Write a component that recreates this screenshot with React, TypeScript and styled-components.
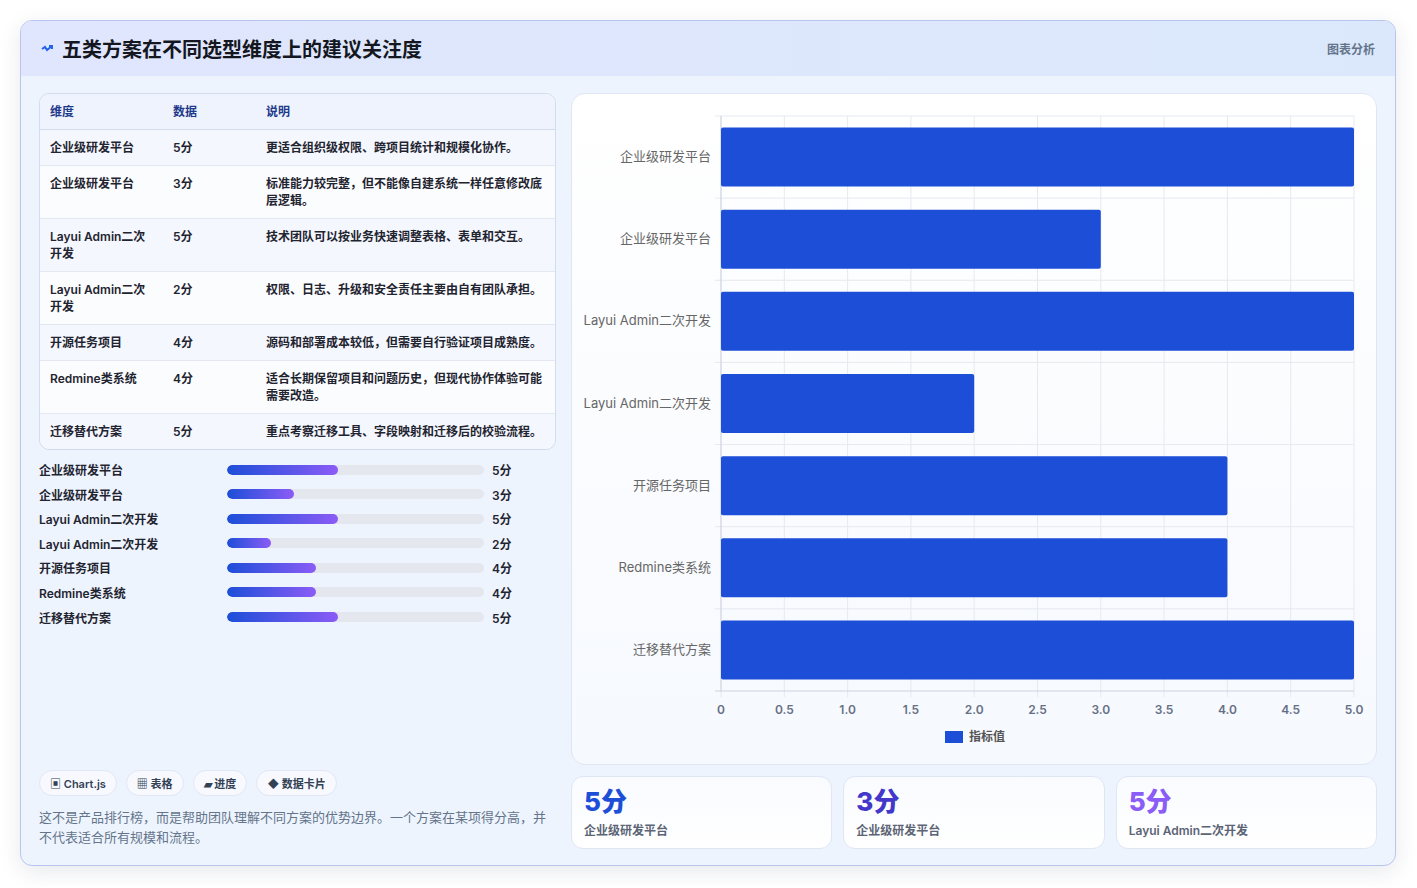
import styled, { createGlobalStyle } from 'styled-components';

/* —— data —— */
interface Row { name: string; score: number; note: string }
const rows: Row[] = [
  { name: '企业级研发平台', score: 5, note: '更适合组织级权限、跨项目统计和规模化协作。' },
  { name: '企业级研发平台', score: 3, note: '标准能力较完整，但不能像自建系统一样任意修改底层逻辑。' },
  { name: 'Layui Admin二次开发', score: 5, note: '技术团队可以按业务快速调整表格、表单和交互。' },
  { name: 'Layui Admin二次开发', score: 2, note: '权限、日志、升级和安全责任主要由自有团队承担。' },
  { name: '开源任务项目', score: 4, note: '源码和部署成本较低，但需要自行验证项目成熟度。' },
  { name: 'Redmine类系统', score: 4, note: '适合长期保留项目和问题历史，但现代协作体验可能需要改造。' },
  { name: '迁移替代方案', score: 5, note: '重点考察迁移工具、字段映射和迁移后的校验流程。' },
];

const font = `Inter, "Liberation Sans", "Noto Sans CJK SC", sans-serif`;

const Global = createGlobalStyle`
  html, body { margin: 0; background: #fff; font-family: ${font}; }
`;

const Page = styled.div`
  padding: 20px 20px 20px 20px;
`;
const Shell = styled.section`
  width: 1376px;
  height: 846px;
  box-sizing: border-box;
  border: 1px solid #b9c5ef;
  border-radius: 12px;
  background: #eef4fe;
  box-shadow: 0 6px 22px rgba(30, 41, 80, .1);
  overflow: hidden;
  display: flex;
  flex-direction: column;
`;
const Header = styled.header`
  height: 55px;
  flex: none;
  display: flex;
  align-items: center;
  justify-content: space-between;
  padding: 0 20px 0 20px;
  background: linear-gradient(90deg, #e0e6fd, #dbe8fb);
`;
const Title = styled.h1`
  margin: 0;
  display: flex;
  align-items: center;
  gap: 9px;
  font-size: 20px;
  font-weight: 700;
  color: #14171f;
`;
const Tag = styled.span`
  font-size: 12px;
  font-weight: 600;
  color: #64748b;
`;
const Body = styled.div`
  flex: 1;
  display: grid;
  grid-template-columns: 517px 806px;
  gap: 15px;
  padding: 17px 18px 17px 18px;
  min-height: 0;
`;
const Left = styled.div`
  display: flex;
  flex-direction: column;
`;
const Table = styled.table`
  width: 100%;
  border-collapse: separate;
  border-spacing: 0;
  border: 1px solid #d3dbee;
  border-radius: 10px;
  overflow: hidden;
  font-size: 12px;
  font-weight: 600;
  color: #1f2430;
  th, td { text-align: left; padding: 9px 10px; vertical-align: top; line-height: 17px; }
  th { color: #1e3a8a; background: #eef3fd; border-bottom: 1px solid #d3dbee; height: 15px; }
  td { border-top: 1px solid #e3e8f3; }
  tr:nth-child(1) td { border-top: none; }
  tbody tr:nth-child(odd) td { background: #f4f7fd; }
  tbody tr:nth-child(even) td { background: #fbfcfe; }
`;
const Bars = styled.div`
  margin-top: 11px;
  display: flex;
  flex-direction: column;
  gap: 7.6px;
`;
const BarRow = styled.div`
  display: grid;
  grid-template-columns: 188px 257px auto;
  align-items: center;
  gap: 0;
  font-size: 12px;
  font-weight: 600;
  color: #1f2430;
  height: 17px;
`;
const Track = styled.div`
  height: 10px;
  border-radius: 5px;
  background: #e4e7ee;
  overflow: hidden;
`;
const Fill = styled.div`
  height: 100%;
  border-radius: 5px;
  background: linear-gradient(90deg, #1d4ed8, #8b5cf6);
`;
const Val = styled.span`
  padding-left: 8px;
`;
const Chips = styled.div`
  margin-top: auto;
  display: flex;
  gap: 9px;
`;
const Chip = styled.span`
  height: 26px;
  box-sizing: border-box;
  padding: 0 10px;
  display: inline-flex;
  align-items: center;
  gap: 3px;
  border-radius: 13px;
  border: 1px solid #e1e7f3;
  background: #f7f9fe;
  font-size: 11px;
  font-weight: 600;
  color: #334155;
`;
const Note = styled.p`
  margin: 11px 0 2px;
  font-size: 13px;
  line-height: 20px;
  color: #64748b;
`;
const Right = styled.div`
  display: flex;
  flex-direction: column;
  gap: 11px;
`;
const ChartCard = styled.div`
  height: 672px;
  box-sizing: border-box;
  border: 1px solid #dfe6f4;
  border-radius: 14px;
  background: linear-gradient(180deg, #ffffff, #f6f9fe);
`;
const Stats = styled.div`
  display: grid;
  grid-template-columns: repeat(3, 1fr);
  gap: 11px;
`;
const Stat = styled.div`
  height: 73px;
  box-sizing: border-box;
  padding: 9px 12px;
  border: 1px solid #dfe6f4;
  border-radius: 12px;
  background: linear-gradient(180deg, #f9fbff, #ffffff);
`;
const Big = styled.div<{ $c: string }>`
  font-size: 26px;
  font-weight: 800;
  line-height: 32px;
  color: ${p => p.$c};
`;
const Small = styled.div`
  font-size: 12px;
  font-weight: 600;
  color: #5b6475;
  margin-top: 3px;
`;

function Chart() {
  const x0 = 149, x1 = 782, y0 = 22, y1 = 597;
  const slot = (y1 - y0) / 7;
  const sx = (v: number) => x0 + (v / 5) * (x1 - x0);
  const ticks = [0, 0.5, 1, 1.5, 2, 2.5, 3, 3.5, 4, 4.5, 5];
  return (
    <svg width="804" height="670" style={{ display: 'block', fontFamily: font }}>
      {ticks.map(t => (
        <line key={t} x1={sx(t)} x2={sx(t)} y1={y0} y2={y1 + 6} stroke="#e6e9f0" />
      ))}
      {rows.map((_, i) => (
        <line key={i} x1={x0 - 6} x2={x1} y1={y0 + i * slot} y2={y0 + i * slot} stroke="#e6e9f0" />
      ))}
      <line x1={x0} x2={x0} y1={y0} y2={y1} stroke="#cbd2e0" />
      <line x1={x0 - 6} x2={x1} y1={y1} y2={y1} stroke="#cbd2e0" />
      {rows.map((r, i) => {
        const cy = y0 + i * slot + slot / 2;
        return (
          <g key={i}>
            <rect x={x0} y={cy - 29.5} width={sx(r.score) - x0} height={59} rx={2} fill="#1d4ed8" />
            <text x={x0 - 10} y={cy + 4} textAnchor="end" fontSize="13" fill="#666">{r.name}</text>
          </g>
        );
      })}
      {ticks.map(t => (
        <text key={t} x={sx(t)} y={620} textAnchor="middle" fontSize="12" fontWeight="600" fill="#667085">
          {t === 0 ? '0' : t.toFixed(1)}
        </text>
      ))}
      <rect x={373} y={637} width={18} height={12} fill="#1d4ed8" />
      <text x={397} y={647} fontSize="12" fontWeight="600" fill="#555">指标值</text>
    </svg>
  );
}

export default function App() {
  return (
    <Page>
      <Global />
      <Shell>
        <Header>
          <Title>
            <svg width="12" height="10" viewBox="0 0 12 10">
              <path d="M1 5 L4 3 L6 6 L11 2 M8 2 L11 2 L11 5" stroke="#2563eb" strokeWidth="2" fill="none" />
            </svg>
            五类方案在不同选型维度上的建议关注度
          </Title>
          <Tag>图表分析</Tag>
        </Header>
        <Body>
          <Left>
            <Table>
              <thead>
                <tr><th style={{ width: 103 }}>维度</th><th style={{ width: 73 }}>数据</th><th>说明</th></tr>
              </thead>
              <tbody>
                {rows.map((r, i) => (
                  <tr key={i}><td>{r.name}</td><td>{r.score}分</td><td>{r.note}</td></tr>
                ))}
              </tbody>
            </Table>
            <Bars>
              {rows.map((r, i) => (
                <BarRow key={i}>
                  <span>{r.name}</span>
                  <Track><Fill style={{ width: `${r.score * 8.65}%` }} /></Track>
                  <Val>{r.score}分</Val>
                </BarRow>
              ))}
            </Bars>
            <Chips>
              <Chip>▣ Chart.js</Chip>
              <Chip>▦ 表格</Chip>
              <Chip>▰ 进度</Chip>
              <Chip>◆ 数据卡片</Chip>
            </Chips>
            <Note>这不是产品排行榜，而是帮助团队理解不同方案的优势边界。一个方案在某项得分高，并不代表适合所有规模和流程。</Note>
          </Left>
          <Right>
            <ChartCard><Chart /></ChartCard>
            <Stats>
              <Stat><Big $c="#1d4ed8">5分</Big><Small>企业级研发平台</Small></Stat>
              <Stat><Big $c="#4338ca">3分</Big><Small>企业级研发平台</Small></Stat>
              <Stat><Big $c="#8b5cf6">5分</Big><Small>Layui Admin二次开发</Small></Stat>
            </Stats>
          </Right>
        </Body>
      </Shell>
    </Page>
  );
}
